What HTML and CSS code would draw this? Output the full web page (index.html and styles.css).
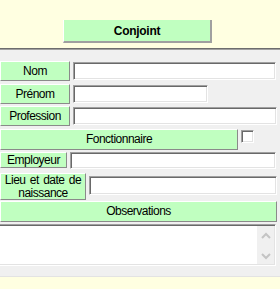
FILE: index.html
```html
<!DOCTYPE html>
<html lang="fr">
<head>
  <meta charset="UTF-8" />
  <title>Conjoint</title>
  <link rel="stylesheet" href="styles.css">
</head>
<body>
  <div class="banner">
    <div class="title-btn">Conjoint</div>
  </div>

  <div class="form">
    <div class="row row-nom">
      <div class="lbl">Nom</div>
      <input type="text" class="field f-nom">
    </div>
    <div class="row row-prenom">
      <div class="lbl">Prénom</div>
      <input type="text" class="field f-prenom">
    </div>
    <div class="row row-prof">
      <div class="lbl">Profession</div>
      <input type="text" class="field f-prof">
    </div>
    <div class="row row-fonc">
      <div class="lbl lbl-fonc">Fonctionnaire</div>
      <span class="check"></span>
    </div>
    <div class="row row-emp">
      <div class="lbl lbl-emp">Employeur</div>
      <input type="text" class="field f-emp">
    </div>
    <div class="row row-lieu">
      <div class="lbl lbl-lieu">Lieu et date de<br>naissance</div>
      <input type="text" class="field f-lieu">
    </div>
    <div class="row row-obs">
      <div class="lbl lbl-obs">Observations</div>
    </div>
    <div class="memo">
      <div class="memo-text"></div>
      <div class="memo-scroll">
        <svg width="10" height="7" viewBox="0 0 10 7"><path d="M1 6 L5 2 L9 6" fill="none" stroke="#c4c4c4" stroke-width="2"/></svg>
        <svg width="10" height="7" viewBox="0 0 10 7"><path d="M1 1 L5 5 L9 1" fill="none" stroke="#c4c4c4" stroke-width="2"/></svg>
      </div>
    </div>
  </div>

  <div class="footer"></div>
</body>
</html>
```

FILE: styles.css
```css
* {
  margin: 0;
  padding: 0;
  box-sizing: border-box;
}

body {
  width: 280px;
  height: 289px;
  overflow: hidden;
  background: #f0f0f0;
  font-family: 'Liberation Sans', Arial, sans-serif;
  font-size: 12px;
  color: #000;
}

.banner {
  height: 48px;
  background: #ffffe1;
  padding-top: 20px;
  padding-left: 63px;
}

.title-btn {
  width: 149px;
  height: 23px;
  background: #c0ffc0;
  border-left: 1px solid #fff;
  border-right: 2px solid #a0a0a0;
  border-bottom: 2px solid #a0a0a0;
  font-size: 12px;
  font-weight: bold;
  letter-spacing: -0.3px;
  display: flex;
  align-items: center;
  justify-content: center;
}

.form {
  border-top: 1px solid #6d6d6d;
  box-shadow: inset 0 1px 0 #a0a0a0;
  padding-top: 1px;
  height: 228px;
  padding-bottom: 8px;
}

.row {
  display: flex;
  align-items: flex-start;
}

.lbl {
  width: 70px;
  height: 20px;
  background: #c0ffc0;
  border-top: 1px solid #fff;
  border-left: 1px solid #fff;
  border-right: 1px solid #8a8a8a;
  border-bottom: 1px solid #8a8a8a;
  display: flex;
  align-items: center;
  justify-content: center;
  text-align: center;
  letter-spacing: -0.5px;
  word-spacing: 1.5px;
  line-height: 13px;
}

.field {
  margin-left: 3px;
  margin-top: 1px;
  height: 18px;
  background: #fff;
  border-top: 1px solid #a0a0a0;
  border-left: 1px solid #a0a0a0;
  border-right: 1px solid #fff;
  border-bottom: 1px solid #fff;
  box-shadow: inset 1px 1px 0 #696969, inset -1px -1px 0 #e3e3e3;
  outline: none;
  font: inherit;
}

.row-nom { margin-top: 11px; }
.f-nom { width: 203px; }

.row-prenom { margin-top: 3px; }
.f-prenom { width: 135px; }

.row-prof { margin-top: 2px; }
.f-prof { width: 204px; }

.row-fonc { margin-top: 3px; }
.lbl-fonc {
  width: 238px;
  height: 21px;
}

.check {
  display: block;
  width: 13px;
  height: 13px;
  margin-left: 3px;
  margin-top: 1px;
  background: #fff;
  border-top: 1px solid #a0a0a0;
  border-left: 1px solid #a0a0a0;
  border-right: 1px solid #fff;
  border-bottom: 1px solid #fff;
  box-shadow: inset 1px 1px 0 #696969, inset -1px -1px 0 #e3e3e3;
}

.row-emp { margin-top: 2px; }
.lbl-emp {
  width: 67px;
  height: 16px;
}
.f-emp {
  width: 206px;
  height: 17px;
  margin-top: 0;
}

.row-lieu { margin-top: 4px; }
.lbl-lieu {
  width: 86px;
  height: 27px;
}
.f-lieu {
  width: 188px;
  height: 19px;
  margin-top: 3px;
}

.row-obs { margin-top: 1px; }
.lbl-obs {
  width: 277px;
  height: 21px;
}

.memo {
  margin-top: 2px;
  width: 276px;
  height: 42px;
  display: flex;
  background: #fff;
  border-top: 1px solid #a0a0a0;
  border-right: 1px solid #fff;
  border-bottom: 1px solid #fff;
  box-shadow: inset 0 1px 0 #696969, inset -1px -1px 0 #e3e3e3;
}

.memo-text {
  flex: 1;
}

.memo-scroll {
  width: 17px;
  margin: 1px 1px 1px 0;
  background: #f0f0f0;
  display: flex;
  flex-direction: column;
  justify-content: space-between;
  align-items: center;
  padding: 6px 0 4px;
}

.memo-scroll svg {
  display: block;
}

.footer {
  height: 13px;
  background: #ffffe1;
  border-top: 1px solid #e3e3e3;
}
```
